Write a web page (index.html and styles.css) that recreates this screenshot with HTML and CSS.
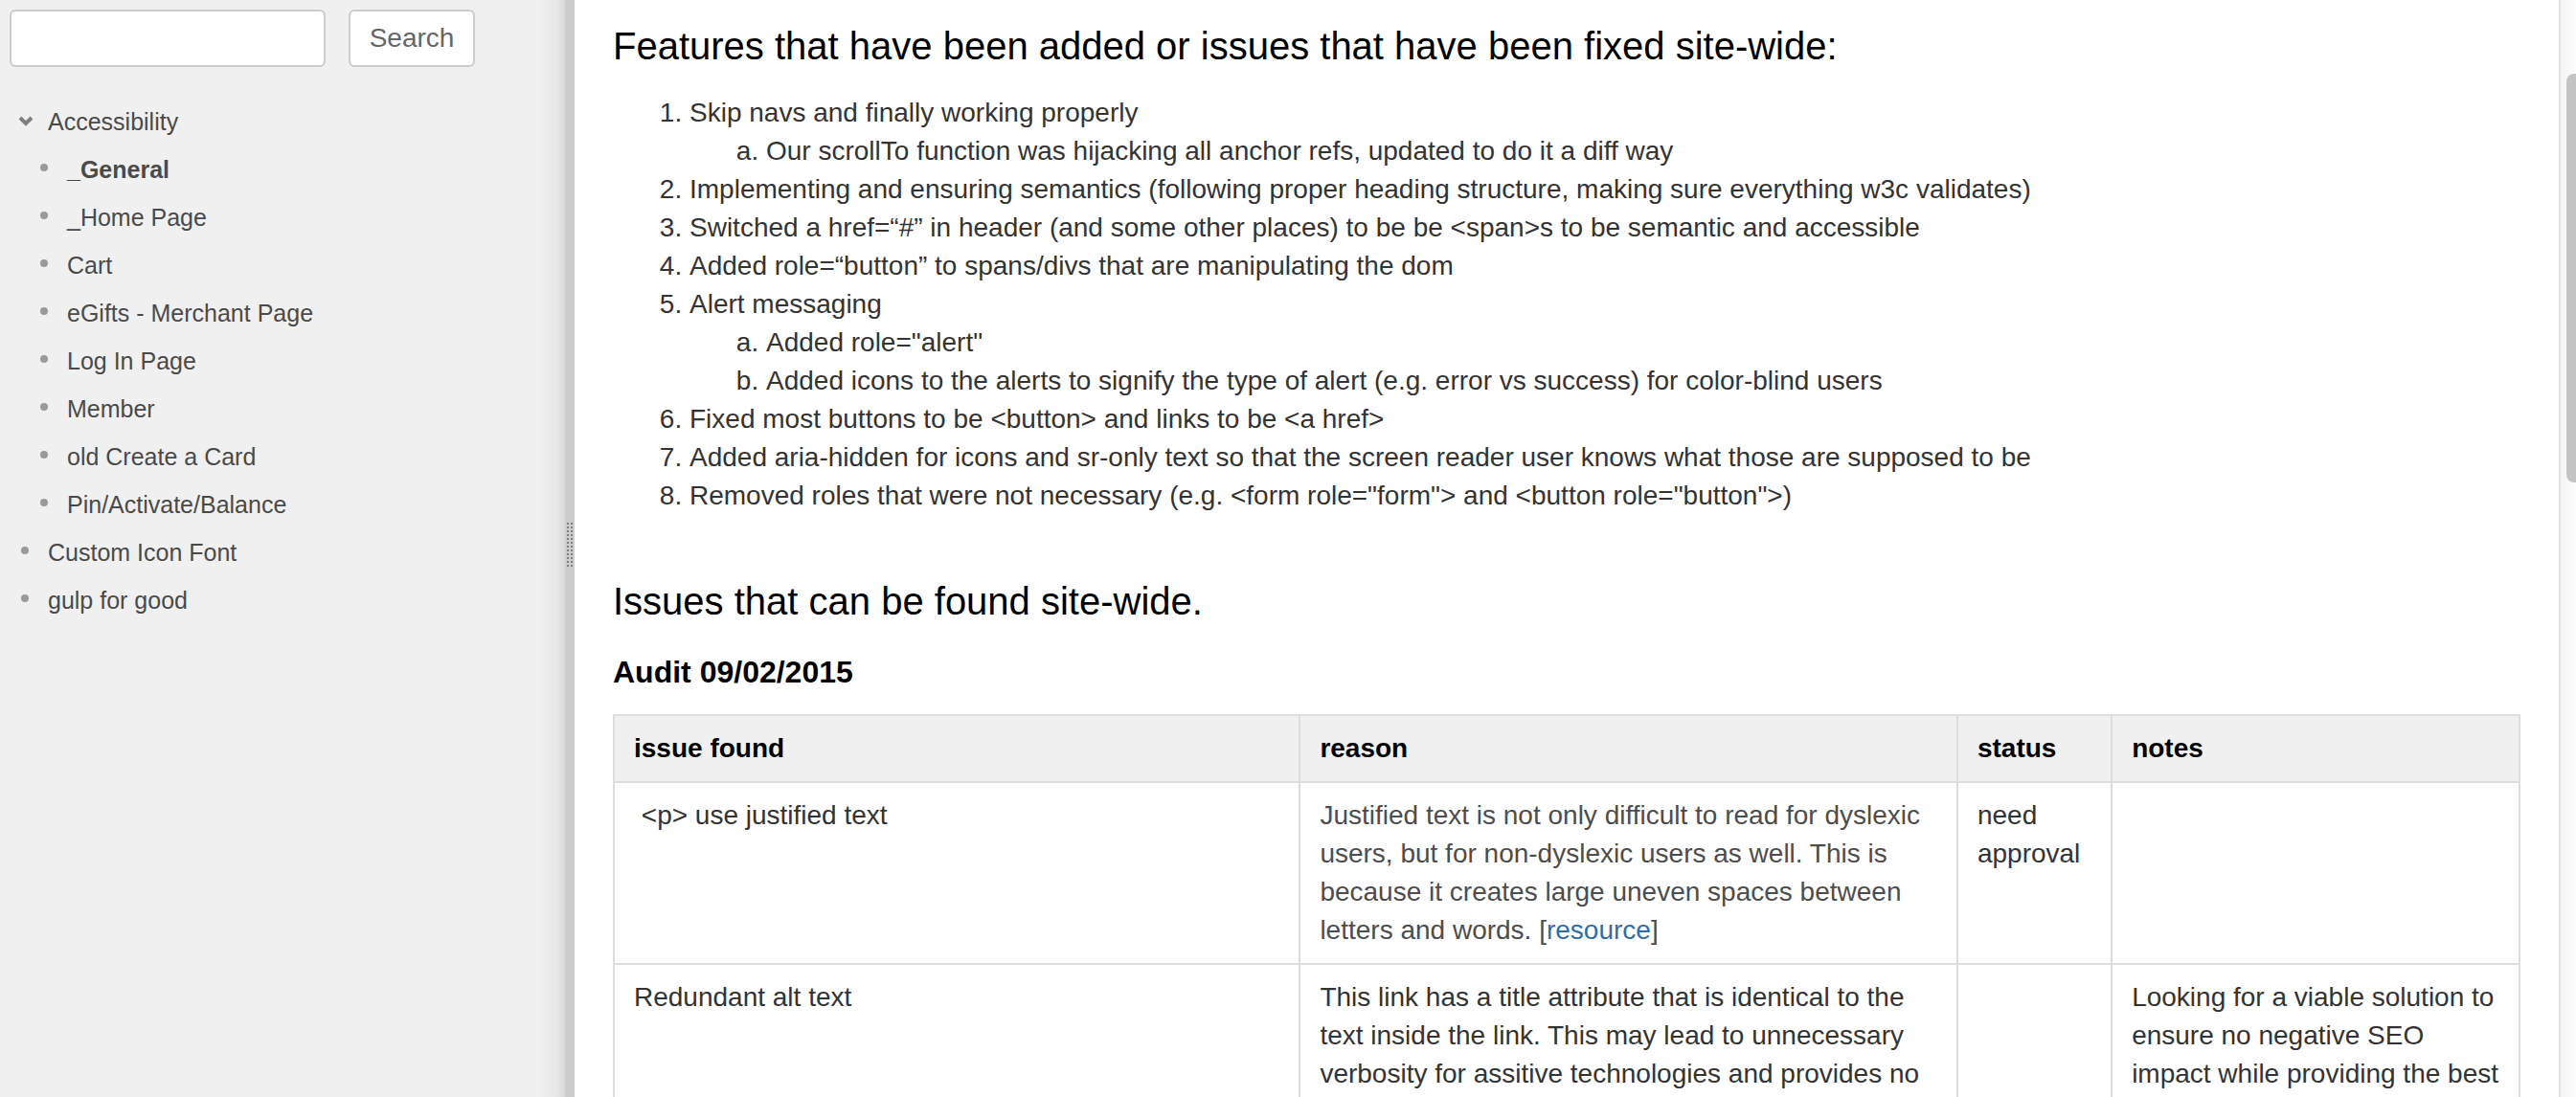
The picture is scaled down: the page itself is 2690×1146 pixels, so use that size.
FILE: index.html
```html
<!DOCTYPE html>
<html lang="en">
<head>
<meta charset="utf-8">
<title>_General - Accessibility</title>
<link rel="stylesheet" href="styles.css">
</head>
<body>
<div class="layout">
  <aside class="sidebar">
    <form class="search">
      <input class="search-field" type="text" aria-label="Search pages">
      <button class="search-button" type="button">Search</button>
    </form>
    <nav aria-label="Page tree">
      <ul class="tree">
        <li>
          <div class="tree-item">
            <svg class="chevron" viewBox="0 0 16 12" aria-hidden="true"><path d="M2 2 L8 8 L14 2"/></svg>
            <a href="#">Accessibility</a>
          </div>
          <ul class="tree tree-nested">
            <li class="tree-item"><span class="dot"></span><a class="current" href="#">_General</a></li>
            <li class="tree-item"><span class="dot"></span><a href="#">_Home Page</a></li>
            <li class="tree-item"><span class="dot"></span><a href="#">Cart</a></li>
            <li class="tree-item"><span class="dot"></span><a href="#">eGifts - Merchant Page</a></li>
            <li class="tree-item"><span class="dot"></span><a href="#">Log In Page</a></li>
            <li class="tree-item"><span class="dot"></span><a href="#">Member</a></li>
            <li class="tree-item"><span class="dot"></span><a href="#">old Create a Card</a></li>
            <li class="tree-item"><span class="dot"></span><a href="#">Pin/Activate/Balance</a></li>
          </ul>
        </li>
        <li class="tree-item"><span class="dot"></span><a href="#">Custom Icon Font</a></li>
        <li class="tree-item"><span class="dot"></span><a href="#">gulp for good</a></li>
      </ul>
    </nav>
  </aside>
  <div class="splitter"><div class="grip"></div></div>
  <main class="content">
    <h2>Features that have been added or issues that have been fixed site-wide:</h2>
    <ol class="features">
      <li>Skip navs and finally working properly
        <ol>
          <li>Our scrollTo function was hijacking all anchor refs, updated to do it a diff way</li>
        </ol>
      </li>
      <li>Implementing and ensuring semantics (following proper heading structure, making sure everything w3c validates)</li>
      <li>Switched a href=“#” in header (and some other places) to be be &lt;span&gt;s to be semantic and accessible</li>
      <li>Added role=“button” to spans/divs that are manipulating the dom</li>
      <li>Alert messaging
        <ol>
          <li>Added role="alert"</li>
          <li>Added icons to the alerts to signify the type of alert (e.g. error vs success) for color-blind users</li>
        </ol>
      </li>
      <li>Fixed most buttons to be &lt;button&gt; and links to be &lt;a href&gt;</li>
      <li>Added aria-hidden for icons and sr-only text so that the screen reader user knows what those are supposed to be</li>
      <li>Removed roles that were not necessary (e.g. &lt;form role="form"&gt; and &lt;button role="button"&gt;)</li>
    </ol>
    <h2 class="section">Issues that can be found site-wide.</h2>
    <h3>Audit 09/02/2015</h3>
    <table class="audit">
      <colgroup>
        <col class="col-issue"><col class="col-reason"><col class="col-status"><col class="col-notes">
      </colgroup>
      <thead>
        <tr><th scope="col">issue found</th><th scope="col">reason</th><th scope="col">status</th><th scope="col">notes</th></tr>
      </thead>
      <tbody>
        <tr>
          <td>&nbsp;&lt;p&gt; use justified text</td>
          <td class="muted">Justified text is not only difficult to read for dyslexic users, but for non-dyslexic users as well. This is because it creates large uneven spaces between letters and words. [<a href="#">resource</a>]</td>
          <td>need approval</td>
          <td></td>
        </tr>
        <tr>
          <td>Redundant alt text</td>
          <td>This link has a title attribute that is identical to the text inside the link. This may lead to unnecessary verbosity for assitive technologies and provides no</td>
          <td></td>
          <td>Looking for a viable solution to ensure no negative SEO impact while providing the best</td>
        </tr>
      </tbody>
    </table>
  </main>
  <div class="scroll-track"><div class="scroll-thumb"></div></div>
</div>
</body>
</html>
```
FILE: styles.css
```css
* {
  box-sizing: border-box;
}

body {
  margin: 0;
  background: #fff;
  color: #333;
  font: 28px/40px "Liberation Sans", Arial, sans-serif;
}

a {
  color: #326ca6;
  text-decoration: none;
}

.layout {
  display: flex;
  height: 100vh;
  overflow: hidden;
}

/* Sidebar */
.sidebar {
  flex: 0 0 590px;
  padding: 10px;
  background: linear-gradient(to left, #dadada, #e8e8e8 10px, #f0f0f0 26px);
}

.search {
  display: flex;
  gap: 24px;
  margin-bottom: 32px;
}

.search-field,
.search-button {
  height: 60px;
  border: 2px solid #ccc;
  border-radius: 6px;
  background: #fff;
  font: inherit;
}

.search-field {
  width: 330px;
  padding: 0 10px;
}

.search-button {
  width: 132px;
  padding: 0;
  color: #666;
}

.tree {
  margin: 0;
  padding: 0;
  list-style: none;
  font-size: 25px;
  line-height: 50px;
}

.tree-nested {
  padding-left: 20px;
}

.tree-item {
  display: flex;
  align-items: center;
  padding-left: 12px;
}

.tree-item a {
  color: #4a4a4a;
}

.tree-item .current {
  font-weight: bold;
}

.dot {
  width: 8px;
  height: 8px;
  margin: 0 20px 4px 0;
  border-radius: 50%;
  background: #999;
}

.chevron {
  width: 16px;
  height: 12px;
  margin: 0 15px 0 -3px;
  fill: none;
  stroke: #808080;
  stroke-width: 4;
}

.splitter {
  display: flex;
  flex: 0 0 10px;
  align-items: center;
  justify-content: center;
  padding-bottom: 8px;
  background: #ccc;
}

.grip {
  width: 6px;
  height: 46px;
  background:
    repeating-linear-gradient(to bottom, transparent 0 2px, #ccc 2px 4px),
    repeating-linear-gradient(to right, #808080 0 2px, #ccc 2px 4px);
}

/* Page content */
.content {
  flex: 1;
  min-width: 0;
  padding: 18px 40px;
}

h2,
h3 {
  margin: 0 0 20px;
  color: #000;
}

h2 {
  font-size: 40px;
  font-weight: normal;
  line-height: 60px;
}

h3 {
  font-size: 32px;
  line-height: 48px;
}

.section {
  margin-top: 60px;
}

.features,
.features ol {
  margin: 0;
  padding-left: 80px;
}

.features ol {
  list-style: lower-alpha;
}

.audit {
  width: 100%;
  table-layout: fixed;
  border-collapse: collapse;
}

.col-issue {
  width: 36%;
}

.col-reason {
  width: 34.5%;
}

.col-status {
  width: 8.1%;
}

.audit th,
.audit td {
  padding: 14px 20px;
  border: 2px solid #ddd;
  text-align: left;
  vertical-align: top;
}

.audit th {
  background: #f0f0f0;
  color: #000;
}

.audit .muted {
  color: #4d4d4d;
}

/* Scroll bar */
.scroll-track {
  flex: 0 0 18px;
  padding: 77px 0 0 6px;
  border-left: 2px solid #e2e2e2;
  background: linear-gradient(to right, #f5f5f5, #fcfcfc);
}

.scroll-thumb {
  height: 427px;
  border-radius: 8px 0 0 8px;
  background: #c4c4c4;
}
```
